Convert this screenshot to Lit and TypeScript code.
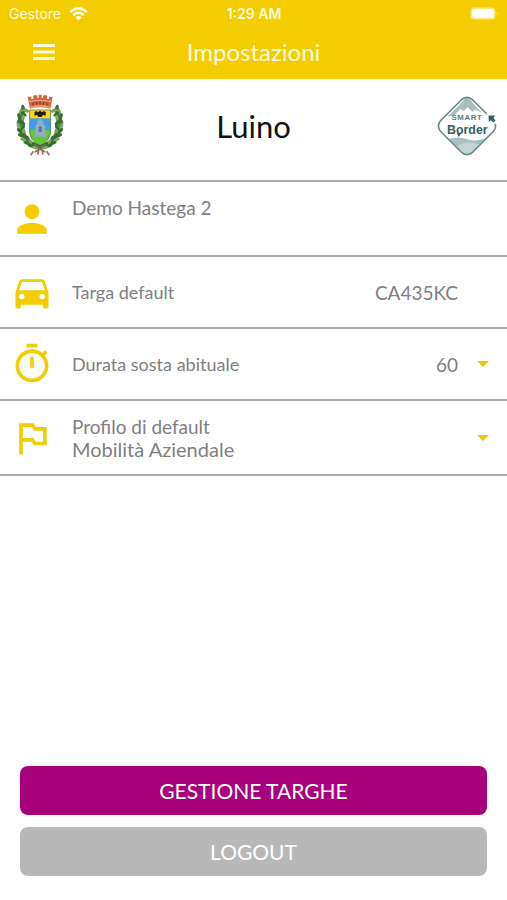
import { LitElement, html, css, svg } from "lit";
import { customElement, state } from "lit/decorators.js";

const icons = {
  person: svg`<path d="M12 12c2.21 0 4-1.79 4-4s-1.79-4-4-4-4 1.79-4 4 1.79 4 4 4zm0 2c-2.67 0-8 1.34-8 4v2h16v-2c0-2.66-5.33-4-8-4z"/>`,
  car: svg`<path d="M18.92 6.01C18.72 5.42 18.16 5 17.5 5h-11c-.66 0-1.21.42-1.42 1.01L3 12v8c0 .55.45 1 1 1h1c.55 0 1-.45 1-1v-1h12v1c0 .55.45 1 1 1h1c.55 0 1-.45 1-1v-8l-2.08-5.99zM6.5 16c-.83 0-1.5-.67-1.5-1.5S5.67 13 6.5 13s1.5.67 1.5 1.5S7.33 16 6.5 16zm11 0c-.83 0-1.5-.67-1.5-1.5s.67-1.5 1.5-1.5 1.5.67 1.5 1.5-.67 1.5-1.5 1.5zM5 11l1.5-4.5h11L19 11H5z"/>`,
  timer: svg`<path d="M15 1H9v2h6V1zm-4 13h2V8h-2v6zm8.03-6.61l1.42-1.42c-.43-.51-.9-.99-1.41-1.41l-1.42 1.42C16.07 4.74 14.12 4 12 4c-4.97 0-9 4.03-9 9s4.02 9 9 9 9-4.03 9-9c0-2.12-.74-4.07-1.97-5.61zM12 20c-3.87 0-7-3.13-7-7s3.13-7 7-7 7 3.13 7 7-3.13 7-7 7z"/>`,
  flag: svg`<path d="M14 6l-1-2H5v17h2v-7h5l1 2h7V6h-6zm4 8h-4l-1-2H7V6h5l1 2h5v6z"/>`,
};

/* Leaves of the left half of the wreath: x, y, rotation, dark or light. */
const leaves: [number, number, number, boolean][] = [
  [42, 60, 70, true], [50, 68, 20, false], [34, 72, 110, false], [43, 78, 40, true],
  [30, 85, 60, true], [41, 90, 100, false], [29, 99, 120, true], [40, 104, 50, true],
  [28, 114, 70, false], [41, 118, 110, true], [31, 128, 40, true], [44, 131, 80, false],
  [35, 142, 20, true], [47, 144, 60, true], [42, 155, 30, false], [56, 153, 70, true],
  [52, 165, 20, true], [65, 162, 50, false], [64, 173, 20, true], [76, 170, 40, true],
  [78, 179, 10, false], [88, 176, 30, true],
];

@customElement("town-crest")
export class TownCrest extends LitElement {
  static styles = css`
    :host { display: block; }
    svg { display: block; width: 100%; }
  `;
  render() {
    const half = svg`
      <path d="M44 60Q24 96 38 134Q54 168 90 178" fill="none" stroke="#4c8040" stroke-width="14"/>
      ${leaves.map(
        ([x, y, r, dark]) => svg`<ellipse cx=${x} cy=${y} rx="10" ry="5"
          fill=${dark ? "#37702f" : "#7ba566"} transform="rotate(${r} ${x} ${y})"/>`
      )}`;
    return html`<svg viewBox="20 18 144 190" role="img" aria-label="Stemma di Luino">
      <g>${half}</g>
      <g transform="translate(184 0) scale(-1 1)">${half}</g>
      <path d="M76 192Q92 186 108 170M108 192Q92 186 76 170" stroke="#8c6a52" stroke-width="5" fill="none"/>
      <path d="M72 190l-8 12M112 190l8 12M88 186l-3 14M98 186l3 14" stroke="#96705c" stroke-width="5"/>
      <path d="M61 66H124V130Q124 158 92 172Q61 158 61 130Z" fill="#3d9fe8"/>
      <path d="M61 66H124V91H61Z" fill="#ffd51c"/>
      <path d="M61 126H124V132Q122 158 92 172Q63 158 61 132Z" fill="#65c832"/>
      <path d="M78 130V114L83 108V98H88V92H97V98H102V108L108 114V130L112 146H73Z" fill="#94abc0"/>
      <path d="M88 132V118Q92 112 97 118V132Z" fill="#507aa2"/>
      <path d="M75 73Q81 66 87 73L92 67L97 73Q104 66 110 73L108 84L102 80L96 87H88L82 80L76 84Z" fill="#251e12"/>
      <path d="M61 66H124V130Q124 158 92 172Q61 158 61 130Z" fill="none" stroke="#476d55" stroke-width="2"/>
      <path d="M55 26H66V33H72V22H84V30H88V20H97V30H101V22H113V33H119V26H130L123 62Q92 54 62 62Z" fill="#d5653d"/>
      <path d="M59 41Q92 33 126 41M63 58Q92 50 122 58" stroke="#f0a078" stroke-width="4" fill="none"/>
      <path d="M71 44V52M82 42V50M92 41V49M102 42V50M113 44V52" stroke="#913c24" stroke-width="4"/>
    </svg>`;
  }
}

@customElement("smart-border-logo")
export class SmartBorderLogo extends LitElement {
  static styles = css`
    :host { display: block; }
    svg { display: block; width: 100%; }
    text { font-family: "Liberation Sans", sans-serif; font-weight: 700; text-anchor: middle; }
    .top { font-size: 24px; letter-spacing: 2px; fill: #5b7f80; }
    .name { font-size: 38px; fill: #355f63; }
  `;
  render() {
    return html`<svg viewBox="18 20 184 184" role="img" aria-label="Smart Border">
      <defs><clipPath id="inside"><rect x="43" y="45" width="134" height="134" rx="22" transform="rotate(45 110 112)"/></clipPath></defs>
      <g clip-path="url(#inside)">
        <path d="M50 84L84 50L110 20L136 50L156 72L136 62L126 68L112 54L100 66L90 60L72 78Z" fill="#a9bfbf"/>
        <path d="M52 152Q84 142 108 152Q136 162 172 148L150 210H70Z" fill="#a9bfbf"/>
        <path d="M78 176Q108 154 146 168L120 204H100Z" fill="#c4d3d3"/>
      </g>
      <rect x="41" y="43" width="138" height="138" rx="24" transform="rotate(45 110 112)" fill="none" stroke="#648787" stroke-width="5"/>
      <path d="M170 72L206 72L206 108L192 104L172 92Z" fill="#fff"/>
      <path d="M176 80H197L191 87L197 95L191 101L183 94L177 100Z" fill="#315f62"/>
      <text class="top" x="110" y="94">SMART</text>
      <text class="name" x="111" y="136">Border</text>
      <path d="M78 134h14l-7 12z" fill="#355f63"/>
    </svg>`;
  }
}

@customElement("app-root")
export class AppRoot extends LitElement {
  @state() private minutes = "60";

  static styles = css`
    :host {
      --yellow: #f4cd00;
      --grey: #808080;
      --line: #acacac;
      display: flex;
      flex-direction: column;
      min-height: 100vh;
      background: #fff;
      color: var(--grey);
      font-family: Lato, "Liberation Sans", sans-serif;
      font-size: 20px;
      line-height: 23px;
    }
    * { box-sizing: border-box; }
    svg { display: block; }
    h1, h2 { margin: 0; font-weight: 400; text-align: center; }
    button, select { margin: 0; padding: 0; border: 0; font: inherit; color: inherit; background: none; cursor: pointer; }

    .top { background: var(--yellow); color: #fffbdc; padding-bottom: 3px; }
    .status {
      display: grid;
      grid-template-columns: 1fr auto 1fr;
      align-items: center;
      height: 27px;
      padding: 0 8px 0 9px;
      font: 14px/20px Inter, "Liberation Sans", sans-serif;
    }
    .carrier { display: flex; align-items: center; gap: 8px; }
    .clock { font-weight: 600; }
    .battery { justify-self: end; }
    .bar { display: grid; grid-template-columns: 48px 1fr 48px; align-items: center; height: 49px; padding: 0 20px; }
    .menu { display: grid; place-items: center; width: 48px; height: 44px; }
    .bar h1 { font-size: 24px; line-height: 32px; }

    .town {
      display: grid;
      grid-template-columns: 60px 1fr 60px;
      align-items: center;
      min-height: 103px;
      padding: 0 10px 8px;
      border-bottom: 2px solid var(--line);
    }
    .town h2 { color: #111; font-size: 31px; line-height: 36px; }
    .crest { width: 48px; justify-self: center; }

    .row {
      display: grid;
      grid-template-columns: 44px 1fr auto;
      align-items: center;
      column-gap: 18px;
      min-height: 72px;
      padding: 0 18px 0 10px;
      border-bottom: 2px solid var(--line);
    }
    .tall { min-height: 75px; }
    .icon { width: 44px; height: 44px; fill: var(--yellow); }
    .user { align-self: start; padding-top: 14px; font-size: 19px; }
    .small { font-size: 18px; }
    .value { padding-right: 31px; font-size: 19px; }
    .pick { display: grid; align-items: center; }
    .pick > * { grid-area: 1 / 1; }
    .pick svg { justify-self: end; pointer-events: none; fill: #eec700; }
    .pick select { appearance: none; width: 100%; height: 32px; padding-right: 31px; }
    .minutes select { width: 64px; text-align-last: right; font-size: 19px; }
    .profile { grid-column: 2 / -1; }
    .profile .text { display: grid; }
    .profile label { font-size: 19px; }
    .profile select { height: 23px; }

    .actions { display: grid; gap: 12px; margin-top: auto; padding: 24px 20px; }
    .actions button { height: 49px; border-radius: 8px; color: #fff; font-size: 21px; line-height: 24px; }
    .primary { background: #a7007d; }
    .secondary { background: #b8b8b8; }
  `;

  private icon(name: keyof typeof icons) {
    return html`<svg class="icon" viewBox="0 0 24 24" aria-hidden="true">${icons[name]}</svg>`;
  }

  private arrow() {
    return html`<svg width="12" height="6" viewBox="0 0 12 6" aria-hidden="true"><path d="M0 0H12L6 6Z"/></svg>`;
  }

  render() {
    return html`
      <header class="top">
        <div class="status">
          <span class="carrier">Gestore
            <svg width="19" height="14" viewBox="0 0 19 14" aria-hidden="true" fill="none" stroke="#fff" stroke-width="2.4">
              <path d="M1.2 5.2Q9.5-2.6 17.8 5.2M4.2 8.2Q9.5 3.4 14.8 8.2"/>
              <path d="M9.5 13.5L6.4 10.4Q9.5 7.8 12.6 10.4Z" fill="#fff" stroke="none"/>
            </svg>
          </span>
          <span class="clock">1:29 AM</span>
          <svg class="battery" width="29" height="13" viewBox="0 0 29 13" aria-label="Batteria carica" role="img">
            <rect x=".5" y=".5" width="25" height="12" rx="3.5" fill="#f9e680"/>
            <rect x="2" y="2" width="22" height="9" rx="2" fill="#fff"/>
            <path d="M27 4.5Q29 6.5 27 8.5Z" fill="#f9e680"/>
          </svg>
        </div>
        <div class="bar">
          <button class="menu" aria-label="Menu">
            <svg width="22" height="16" viewBox="0 0 22 16" fill="#fffbdc"><path d="M0 0H22V3H0ZM0 6.5H22V9.5H0ZM0 13H22V16H0Z"/></svg>
          </button>
          <h1>Impostazioni</h1>
        </div>
      </header>
      <main>
        <section class="town">
          <town-crest class="crest"></town-crest>
          <h2>Luino</h2>
          <smart-border-logo></smart-border-logo>
        </section>
        <div class="row tall">${this.icon("person")}<span class="user">Demo Hastega 2</span></div>
        <div class="row">${this.icon("car")}<span class="small">Targa default</span><span class="value">CA435KC</span></div>
        <div class="row">
          ${this.icon("timer")}
          <label class="small" for="minutes">Durata sosta abituale</label>
          <span class="pick minutes">
            <select id="minutes" .value=${this.minutes}
              @change=${(e: Event) => (this.minutes = (e.target as HTMLSelectElement).value)}>
              <option>60</option>
            </select>
            ${this.arrow()}
          </span>
        </div>
        <div class="row tall">
          ${this.icon("flag")}
          <div class="pick profile">
            <span class="text">
              <label for="profile">Profilo di default</label>
              <select id="profile"><option>Mobilità Aziendale</option></select>
            </span>
            ${this.arrow()}
          </div>
        </div>
      </main>
      <footer class="actions">
        <button class="primary">GESTIONE TARGHE</button>
        <button class="secondary">LOGOUT</button>
      </footer>
    `;
  }
}
